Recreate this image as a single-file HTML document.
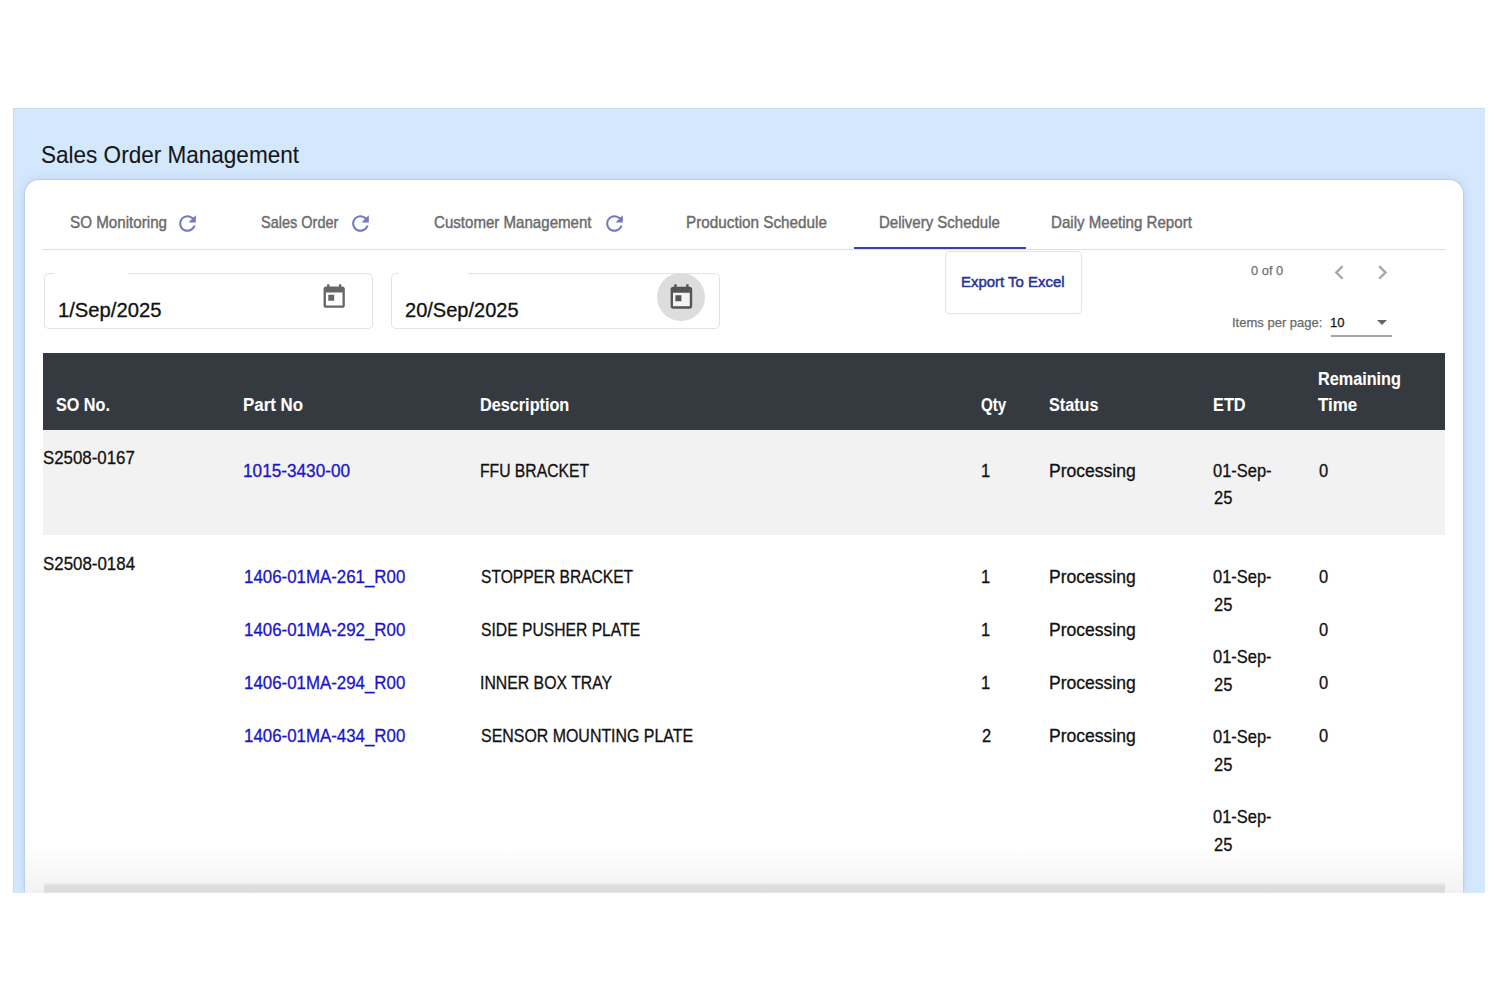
<!DOCTYPE html>
<html><head><meta charset="utf-8">
<style>
html,body{margin:0;padding:0;width:1500px;height:1000px;overflow:hidden;background:#fff;}
body{position:relative;font-family:"Liberation Sans",sans-serif;}
.a{position:absolute;box-sizing:border-box;}
.t{position:absolute;white-space:nowrap;line-height:1;transform-origin:0 0;}
svg{position:absolute;}
</style></head><body>
<div style="position:absolute;left:0;top:0;width:1500px;height:893px;overflow:hidden">
<!-- blue page bg -->
<div class="a" style="left:13px;top:108px;width:1472px;height:785px;background:#d3e8fd;box-shadow:inset 0 1px 0 #c9dcee, inset 1px 0 0 #c9dcee;"></div>
<!-- card -->
<div class="a" style="left:25px;top:179.5px;width:1437.5px;height:713.5px;background:#fff;border-radius:14px 14px 0 0;box-shadow:0 0 12px rgba(0,40,90,.10), 0 0 2px rgba(0,0,0,.22);"></div>
</div>
<!-- tab divider -->
<div class="a" style="left:42px;top:249px;width:1403.5px;height:1.3px;background:#e0e0e0;"></div>
<!-- active tab underline -->
<div class="a" style="left:853.5px;top:246.6px;width:172.3px;height:2.4px;background:#3646a8;"></div>
<!-- refresh icons -->
<svg style="left:175.2px;top:211.4px" width="25" height="25" viewBox="0 0 24 24"><path fill="#7279c0" d="M17.65 6.35C16.2 4.9 14.21 4 12 4c-4.42 0-7.99 3.58-7.99 8s3.57 8 7.99 8c3.73 0 6.84-2.55 7.730-6h-2.08c-.82 2.33-3.04 4-5.65 4-3.31 0-6-2.69-6-6s2.69-6 6-6c1.66 0 3.14.69 4.22 1.78L13 11h7V4l-2.35 2.35z"/></svg>
<svg style="left:348.3px;top:211.4px" width="25" height="25" viewBox="0 0 24 24"><path fill="#7279c0" d="M17.65 6.35C16.2 4.9 14.21 4 12 4c-4.42 0-7.990 3.58-7.99 8s3.57 8 7.99 8c3.73 0 6.84-2.55 7.73-6h-2.08c-.82 2.33-3.04 4-5.65 4-3.31 0-6-2.69-6-6s2.69-6 6-6c1.66 0 3.14.69 4.22 1.78L13 11h7V4l-2.35 2.35z"/></svg>
<svg style="left:602px;top:211.4px" width="25" height="25" viewBox="0 0 24 24"><path fill="#7279c0" d="M17.65 6.35C16.2 4.9 14.21 4 12 4c-4.42 0-7.99 3.58-7.99 8s3.57 8 7.99 8c3.73 0 6.84-2.55 7.73-6h-2.08c-.82 2.33-3.04 4-5.65 4-3.31 0-6-2.690-6-6s2.69-6 6-6c1.66 0 3.14.69 4.22 1.78L13 11h7V4l-2.35 2.35z"/></svg>
<!-- date field 1 -->
<div class="a" style="left:44px;top:273px;width:328.5px;height:55.5px;border:1.2px solid #e3e3e3;border-radius:5px;"></div>
<div class="a" style="left:54px;top:271px;width:74px;height:4px;background:#fff;"></div>
<svg style="left:320.4px;top:282.8px" width="28.4" height="28.4" viewBox="0 0 24 24"><path fill="#666666" d="M19 3h-1V1h-2v2H8V1H6v2H5c-1.11 0-1.99.9-1.99 2L3 19c0 1.1.89 2 2 2h14c1.1 0 2-.9 2-2V5c0-1.1-.9-2-2-2zm0 16H5V8h14v11zM7 10h5v5H7z"/></svg>
<!-- date field 2 -->
<div class="a" style="left:390.5px;top:273px;width:329px;height:55.5px;border:1.2px solid #e3e3e3;border-radius:5px;"></div>
<div class="a" style="left:399px;top:271px;width:69px;height:4px;background:#fff;"></div>
<div class="a" style="left:656.8px;top:273.2px;width:48px;height:48px;border-radius:50%;background:#dddddd;"></div>
<div class="a" style="left:672px;top:292px;width:18px;height:14px;background:#f3f3f3;"></div>
<svg style="left:666.8px;top:282.6px" width="28.8" height="29.3" viewBox="0 0 24 24" preserveAspectRatio="none"><path fill="#555555" d="M19 3h-1V1h-2v2H8V1H6v2H5c-1.11 0-1.99.9-1.99 2L3 19c0 1.1.89 2 2 2h14c1.1 0 2-.9 2-2V5c0-1.1-.9-2-2-2zm0 16H5V8h14v11zM7 10h5v5H7z"/></svg>
<!-- export button -->
<div class="a" style="left:944.7px;top:250.8px;width:137.3px;height:63.5px;border:1.2px solid #e3e3e3;border-radius:4px;"></div>
<!-- paginator -->
<svg style="left:1325.1px;top:258.1px" width="28.8" height="28.8" viewBox="0 0 24 24"><path fill="#a8a8a8" d="M15.41 7.41L14 6l-6 6 6 6 1.41-1.41L10.83 12z"/></svg>
<svg style="left:1367.7px;top:258.1px" width="28.8" height="28.8" viewBox="0 0 24 24"><path fill="#a8a8a8" d="M10 6L8.59 7.41 13.17 12l-4.58 4.59L10 18l6-6z"/></svg>
<div class="a" style="left:1376.7px;top:320px;width:0;height:0;border-left:5px solid transparent;border-right:5px solid transparent;border-top:5.3px solid #666;"></div>
<div class="a" style="left:1330.7px;top:335.4px;width:61.3px;height:1.3px;background:#a6a6a6;"></div>
<!-- table header -->
<div class="a" style="left:43.4px;top:353px;width:1401.3px;height:76.7px;background:#343a40;"></div>
<!-- row 1 bg -->
<div class="a" style="left:43.4px;top:429.7px;width:1401.3px;height:105.8px;background:#f2f2f2;"></div>
<!-- bottom fade & bar -->
<div class="a" style="left:25px;top:846px;width:1437.5px;height:47px;background:linear-gradient(to bottom,rgba(243,243,243,0),#f2f2f2);"></div>
<div class="a" style="left:44px;top:882.5px;width:1401px;height:10.5px;background:linear-gradient(to bottom,#ececec,#dddddd 35%,#dcdcdc 80%,#e2e2e2);"></div>
<div class="t" style="left:40.65px;top:142.77px;font-size:23.8px;font-weight:400;color:#161616;transform:scaleX(0.9468);-webkit-text-stroke:0.1px #161616">Sales Order Management</div>
<div class="t" style="left:69.50px;top:214.03px;font-size:16.2px;font-weight:400;color:#6a6a6a;transform:scaleX(0.9379);-webkit-text-stroke:0.4px #6a6a6a">SO Monitoring</div>
<div class="t" style="left:260.80px;top:214.03px;font-size:16.2px;font-weight:400;color:#6a6a6a;transform:scaleX(0.8956);-webkit-text-stroke:0.4px #6a6a6a">Sales Order</div>
<div class="t" style="left:434.00px;top:214.03px;font-size:16.2px;font-weight:400;color:#6a6a6a;transform:scaleX(0.9313);-webkit-text-stroke:0.4px #6a6a6a">Customer Management</div>
<div class="t" style="left:686.36px;top:214.03px;font-size:16.2px;font-weight:400;color:#6a6a6a;transform:scaleX(0.9435);-webkit-text-stroke:0.4px #6a6a6a">Production Schedule</div>
<div class="t" style="left:878.57px;top:214.03px;font-size:16.2px;font-weight:400;color:#6a6a6a;transform:scaleX(0.9261);-webkit-text-stroke:0.4px #6a6a6a">Delivery Schedule</div>
<div class="t" style="left:1050.67px;top:214.03px;font-size:16.2px;font-weight:400;color:#6a6a6a;transform:scaleX(0.9320);-webkit-text-stroke:0.4px #6a6a6a">Daily Meeting Report</div>
<div class="t" style="left:57.65px;top:301.19px;font-size:19.3px;font-weight:400;color:#111;transform:scaleX(1.0483);-webkit-text-stroke:0.3px #111">1/Sep/2025</div>
<div class="t" style="left:405.00px;top:301.19px;font-size:19.3px;font-weight:400;color:#111;transform:scaleX(1.0383);-webkit-text-stroke:0.3px #111">20/Sep/2025</div>
<div class="t" style="left:961.04px;top:273.82px;font-size:15.5px;font-weight:400;color:#26349a;transform:scaleX(0.9639);-webkit-text-stroke:0.5px #26349a">Export To Excel</div>
<div class="t" style="left:1250.70px;top:264.04px;font-size:13.6px;font-weight:400;color:#707070;transform:scaleX(0.9463);-webkit-text-stroke:0.25px #707070">0 of 0</div>
<div class="t" style="left:1232.34px;top:316.04px;font-size:13.6px;font-weight:400;color:#6a6a6a;transform:scaleX(0.9571);-webkit-text-stroke:0.25px #6a6a6a">Items per page:</div>
<div class="t" style="left:1330.34px;top:316.04px;font-size:13.6px;font-weight:400;color:#1a1a1a;transform:scaleX(0.9615);-webkit-text-stroke:0.3px #1a1a1a">10</div>
<div class="t" style="left:56.00px;top:395.53px;font-size:18.2px;font-weight:700;color:#fff;transform:scaleX(0.8896);-webkit-text-stroke:0.1px #fff">SO No.</div>
<div class="t" style="left:243.07px;top:395.53px;font-size:18.2px;font-weight:700;color:#fff;transform:scaleX(0.9281);-webkit-text-stroke:0.1px #fff">Part No</div>
<div class="t" style="left:480.11px;top:395.53px;font-size:18.2px;font-weight:700;color:#fff;transform:scaleX(0.8924);-webkit-text-stroke:0.1px #fff">Description</div>
<div class="t" style="left:981.00px;top:395.53px;font-size:18.2px;font-weight:700;color:#fff;transform:scaleX(0.8332);-webkit-text-stroke:0.1px #fff">Qty</div>
<div class="t" style="left:1049.30px;top:395.53px;font-size:18.2px;font-weight:700;color:#fff;transform:scaleX(0.8888);-webkit-text-stroke:0.1px #fff">Status</div>
<div class="t" style="left:1212.50px;top:395.53px;font-size:18.2px;font-weight:700;color:#fff;transform:scaleX(0.8967);-webkit-text-stroke:0.1px #fff">ETD</div>
<div class="t" style="left:1317.81px;top:369.73px;font-size:18.2px;font-weight:700;color:#fff;transform:scaleX(0.8915);-webkit-text-stroke:0.1px #fff">Remaining</div>
<div class="t" style="left:1318.30px;top:395.53px;font-size:18.2px;font-weight:700;color:#fff;transform:scaleX(0.9308);-webkit-text-stroke:0.1px #fff">Time</div>
<div class="t" style="left:43.40px;top:448.85px;font-size:18.3px;font-weight:400;color:#111;transform:scaleX(0.9211);-webkit-text-stroke:0.3px #111">S2508-0167</div>
<div class="t" style="left:243.06px;top:462.25px;font-size:18.3px;font-weight:400;color:#1a14c8;transform:scaleX(0.9407);-webkit-text-stroke:0.3px #1a14c8">1015-3430-00</div>
<div class="t" style="left:480.14px;top:462.25px;font-size:18.3px;font-weight:400;color:#111;transform:scaleX(0.8586);-webkit-text-stroke:0.3px #111">FFU BRACKET</div>
<div class="t" style="left:980.80px;top:462.25px;font-size:18.3px;font-weight:400;color:#111;transform:scaleX(0.9025);-webkit-text-stroke:0.3px #111">1</div>
<div class="t" style="left:1048.54px;top:462.25px;font-size:18.3px;font-weight:400;color:#111;transform:scaleX(0.9596);-webkit-text-stroke:0.3px #111">Processing</div>
<div class="t" style="left:1213.40px;top:462.25px;font-size:18.3px;font-weight:400;color:#111;transform:scaleX(0.9007);-webkit-text-stroke:0.3px #111">01-Sep-</div>
<div class="t" style="left:1213.90px;top:489.25px;font-size:18.3px;font-weight:400;color:#111;transform:scaleX(0.9025);-webkit-text-stroke:0.3px #111">25</div>
<div class="t" style="left:1318.70px;top:462.25px;font-size:18.3px;font-weight:400;color:#111;transform:scaleX(0.9025);-webkit-text-stroke:0.3px #111">0</div>
<div class="t" style="left:43.40px;top:555.14px;font-size:18.3px;font-weight:400;color:#111;transform:scaleX(0.9241);-webkit-text-stroke:0.3px #111">S2508-0184</div>
<div class="t" style="left:243.58px;top:567.85px;font-size:18.3px;font-weight:400;color:#1a14c8;transform:scaleX(0.9226);-webkit-text-stroke:0.3px #1a14c8">1406-01MA-261_R00</div>
<div class="t" style="left:481.00px;top:567.85px;font-size:18.3px;font-weight:400;color:#111;transform:scaleX(0.8525);-webkit-text-stroke:0.3px #111">STOPPER BRACKET</div>
<div class="t" style="left:980.80px;top:567.85px;font-size:18.3px;font-weight:400;color:#111;transform:scaleX(0.9025);-webkit-text-stroke:0.3px #111">1</div>
<div class="t" style="left:1048.54px;top:567.85px;font-size:18.3px;font-weight:400;color:#111;transform:scaleX(0.9596);-webkit-text-stroke:0.3px #111">Processing</div>
<div class="t" style="left:1318.70px;top:567.85px;font-size:18.3px;font-weight:400;color:#111;transform:scaleX(0.9025);-webkit-text-stroke:0.3px #111">0</div>
<div class="t" style="left:243.58px;top:621.05px;font-size:18.3px;font-weight:400;color:#1a14c8;transform:scaleX(0.9226);-webkit-text-stroke:0.3px #1a14c8">1406-01MA-292_R00</div>
<div class="t" style="left:481.00px;top:621.05px;font-size:18.3px;font-weight:400;color:#111;transform:scaleX(0.8577);-webkit-text-stroke:0.3px #111">SIDE PUSHER PLATE</div>
<div class="t" style="left:980.80px;top:621.05px;font-size:18.3px;font-weight:400;color:#111;transform:scaleX(0.9025);-webkit-text-stroke:0.3px #111">1</div>
<div class="t" style="left:1048.54px;top:621.05px;font-size:18.3px;font-weight:400;color:#111;transform:scaleX(0.9596);-webkit-text-stroke:0.3px #111">Processing</div>
<div class="t" style="left:1318.70px;top:621.05px;font-size:18.3px;font-weight:400;color:#111;transform:scaleX(0.9025);-webkit-text-stroke:0.3px #111">0</div>
<div class="t" style="left:243.58px;top:674.25px;font-size:18.3px;font-weight:400;color:#1a14c8;transform:scaleX(0.9226);-webkit-text-stroke:0.3px #1a14c8">1406-01MA-294_R00</div>
<div class="t" style="left:480.13px;top:674.25px;font-size:18.3px;font-weight:400;color:#111;transform:scaleX(0.8653);-webkit-text-stroke:0.3px #111">INNER BOX TRAY</div>
<div class="t" style="left:980.80px;top:674.25px;font-size:18.3px;font-weight:400;color:#111;transform:scaleX(0.9025);-webkit-text-stroke:0.3px #111">1</div>
<div class="t" style="left:1048.54px;top:674.25px;font-size:18.3px;font-weight:400;color:#111;transform:scaleX(0.9596);-webkit-text-stroke:0.3px #111">Processing</div>
<div class="t" style="left:1318.70px;top:674.25px;font-size:18.3px;font-weight:400;color:#111;transform:scaleX(0.9025);-webkit-text-stroke:0.3px #111">0</div>
<div class="t" style="left:243.58px;top:727.45px;font-size:18.3px;font-weight:400;color:#1a14c8;transform:scaleX(0.9226);-webkit-text-stroke:0.3px #1a14c8">1406-01MA-434_R00</div>
<div class="t" style="left:481.00px;top:727.45px;font-size:18.3px;font-weight:400;color:#111;transform:scaleX(0.8715);-webkit-text-stroke:0.3px #111">SENSOR MOUNTING PLATE</div>
<div class="t" style="left:981.70px;top:727.45px;font-size:18.3px;font-weight:400;color:#111;transform:scaleX(0.9025);-webkit-text-stroke:0.3px #111">2</div>
<div class="t" style="left:1048.54px;top:727.45px;font-size:18.3px;font-weight:400;color:#111;transform:scaleX(0.9596);-webkit-text-stroke:0.3px #111">Processing</div>
<div class="t" style="left:1318.70px;top:727.45px;font-size:18.3px;font-weight:400;color:#111;transform:scaleX(0.9025);-webkit-text-stroke:0.3px #111">0</div>
<div class="t" style="left:1213.40px;top:568.25px;font-size:18.3px;font-weight:400;color:#111;transform:scaleX(0.9007);-webkit-text-stroke:0.3px #111">01-Sep-</div>
<div class="t" style="left:1213.90px;top:595.54px;font-size:18.3px;font-weight:400;color:#111;transform:scaleX(0.9025);-webkit-text-stroke:0.3px #111">25</div>
<div class="t" style="left:1213.40px;top:648.25px;font-size:18.3px;font-weight:400;color:#111;transform:scaleX(0.9007);-webkit-text-stroke:0.3px #111">01-Sep-</div>
<div class="t" style="left:1213.90px;top:675.54px;font-size:18.3px;font-weight:400;color:#111;transform:scaleX(0.9025);-webkit-text-stroke:0.3px #111">25</div>
<div class="t" style="left:1213.40px;top:728.25px;font-size:18.3px;font-weight:400;color:#111;transform:scaleX(0.9007);-webkit-text-stroke:0.3px #111">01-Sep-</div>
<div class="t" style="left:1213.90px;top:755.54px;font-size:18.3px;font-weight:400;color:#111;transform:scaleX(0.9025);-webkit-text-stroke:0.3px #111">25</div>
<div class="t" style="left:1213.40px;top:808.25px;font-size:18.3px;font-weight:400;color:#111;transform:scaleX(0.9007);-webkit-text-stroke:0.3px #111">01-Sep-</div>
<div class="t" style="left:1213.90px;top:835.54px;font-size:18.3px;font-weight:400;color:#111;transform:scaleX(0.9025);-webkit-text-stroke:0.3px #111">25</div>
</body></html>
